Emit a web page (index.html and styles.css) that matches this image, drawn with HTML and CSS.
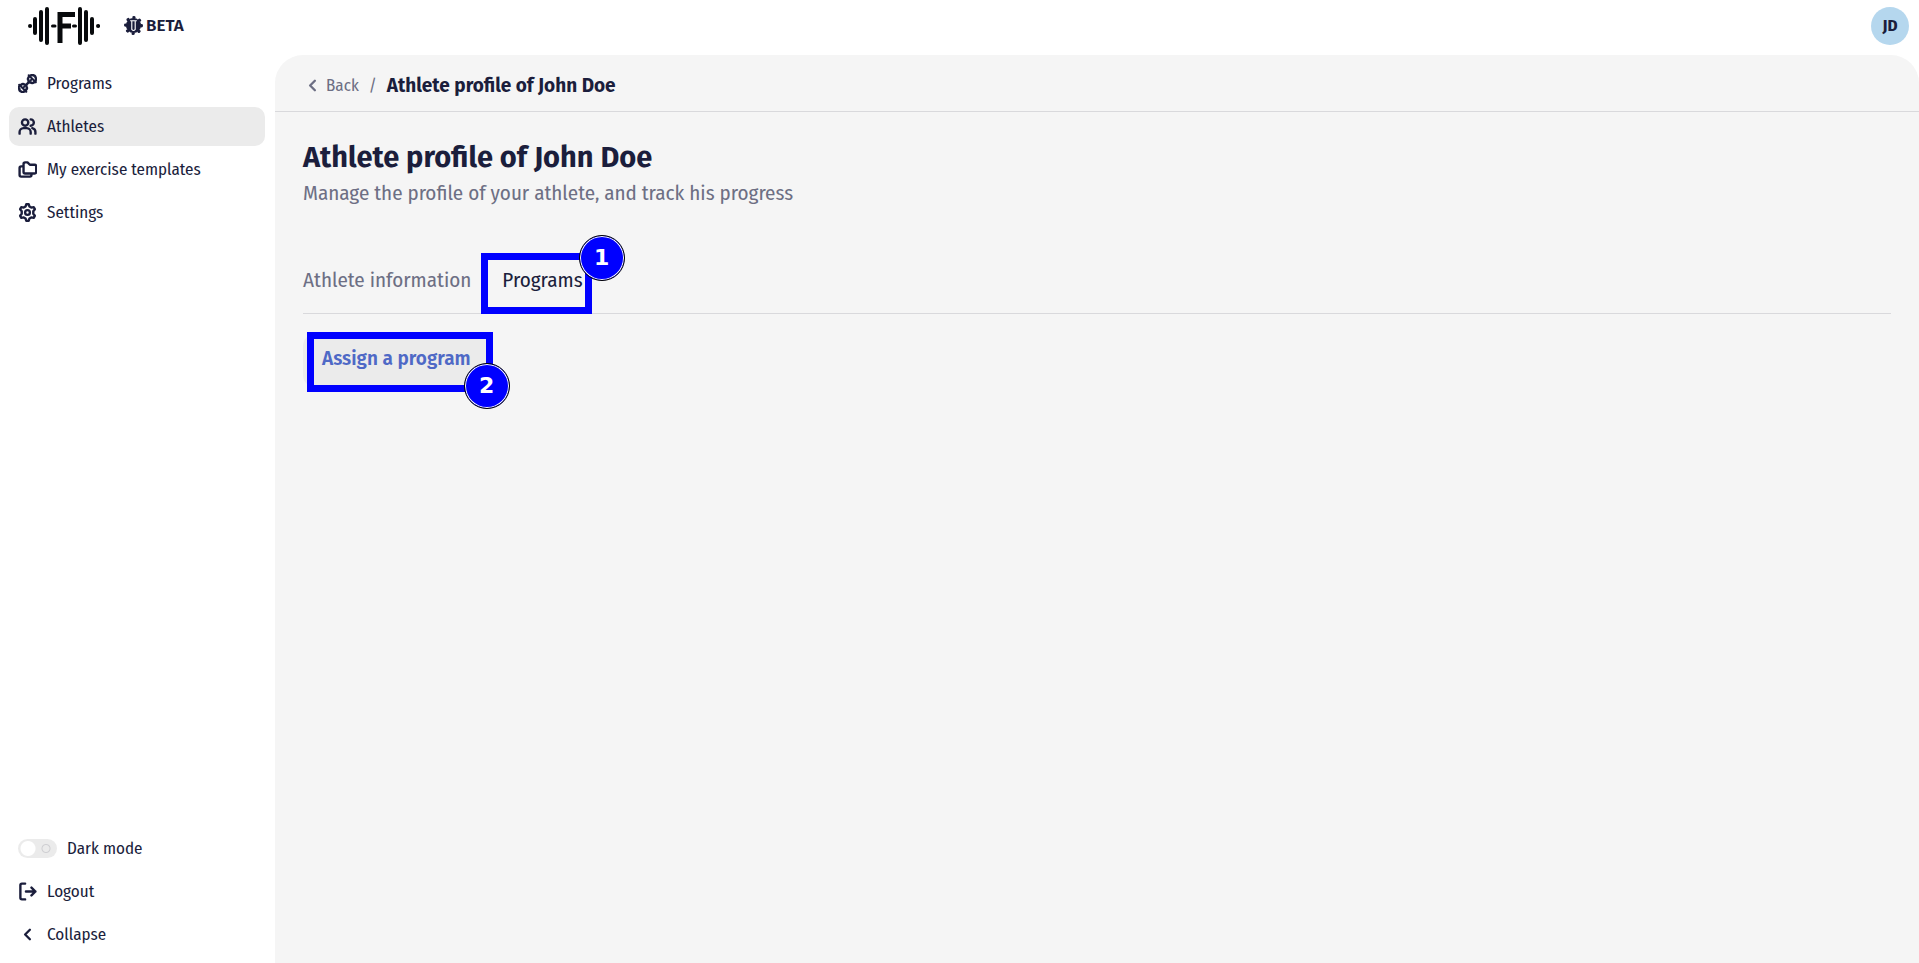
FILE: index.html
```html
<!DOCTYPE html>
<html lang="en">
<head>
<meta charset="utf-8">
<title>Athlete profile of John Doe</title>
<link rel="stylesheet" href="styles.css">
</head>
<body>
<div class="app">
  <header class="topbar">
    <div class="brand">
      <svg class="logo" viewBox="0 0 72 40" role="img" aria-label="F barbell logo">
        <g fill="none" stroke="#080a0c" stroke-width="4" stroke-linecap="round">
          <path d="M2 20h.1M7 13v14M13 6v28M19 3v34M52 3v34M58 6v28M64 13v14M70 20h.1"/>
          <path d="M24.500 20h2.500M45.500 20h2" stroke-width="3"/>
          <path d="M32 37V8.500h15M32 20h11" stroke-width="5" stroke-linecap="butt" stroke-linejoin="miter"/>
        </g>
      </svg>
      <span class="beta">
        <svg class="beta-icon" viewBox="0 0 20 20" aria-hidden="true">
          <circle cx="10" cy="10" r="8" fill="#1b1e3c"/>
          <circle cx="10" cy="10" r="8.500" fill="none" stroke="#1b1e3c" stroke-width="3" stroke-linecap="round" stroke-dasharray=".5 6.175"/>
          <path d="M6.500 5h7M8.200 5v9q1.800 2.500 3.600 0V5" fill="none" stroke="#fff" stroke-width="1.200"/>
        </svg>BETA</span>
    </div>
    <button class="avatar" type="button">JD</button>
  </header>
  <aside class="sidebar">
    <nav class="menu">
      <a class="item" href="#"><svg class="icon" viewBox="0 0 24 24"><path d="M10 14l4-4"/><path d="M2 15.500a2 2 0 0 1 2.500-2 2 2 0 0 1 3.500 0 2 2 0 0 1 2.500 2.500 2 2 0 0 1-.2 3.500 2 2 0 0 1-2.500 2.300 2 2 0 0 1-3.600.2 2 2 0 0 1-2.200-2.800 2 2 0 0 1 0-3.700z"/><path d="M13.500 4.500A2 2 0 0 1 16 2.300a2 2 0 0 1 3.500-.3A2 2 0 0 1 22 4.500 2 2 0 0 1 22 8a2 2 0 0 1-2.300 2.500 2 2 0 0 1-3.500 0A2 2 0 0 1 13.500 8a2 2 0 0 1 0-3.500z"/><path d="m1.500 13.500 9 9M13.500 1.500l9 9M8 16l-2 2M18 6l-2 2" stroke-width="2.500"/></svg>Programs</a>
      <a class="item current" href="#" aria-current="page"><svg class="icon" viewBox="0 0 24 24"><circle cx="9" cy="7" r="4"/><path d="M2 21v-2a5 5 0 0 1 5-5h4a5 5 0 0 1 5 5v2M16 3a4 4 0 0 1 0 8M22 21v-2a5 5 0 0 0-4-5"/></svg>Athletes</a>
      <a class="item" href="#"><svg class="icon" viewBox="0 0 24 24"><path d="M9 3h3l3 3h6a2 2 0 0 1 2 2v7a2 2 0 0 1-2 2H9a2 2 0 0 1-2-2V5a2 2 0 0 1 2-2zM17 17v2a2 2 0 0 1-2 2H4a2 2 0 0 1-2-2V10a2 2 0 0 1 2-2h3"/></svg>My exercise templates</a>
      <a class="item" href="#"><svg class="icon" viewBox="0 0 24 24"><path d="M9.500 4.500 10.500 1.500h3l1 3 2.200 1.300 3.100-.6 1.500 2.600L19.300 10.500v3l2 2.700-1.500 2.600-3.100-.6-2.200 1.300-1 3h-3l-1-3-2.200-1.300-3.100.6-1.500-2.600 2-2.700v-3L2.700 7.800l1.500-2.600 3.100.6z"/><circle cx="12" cy="12" r="3"/></svg>Settings</a>
    </nav>
    <div class="menu">
      <label class="item"><input class="switch" type="checkbox" role="switch">Dark mode</label>
      <button class="item" type="button"><svg class="icon" viewBox="0 0 24 24"><path d="M9 2H5a2 2 0 0 0-2 2v16a2 2 0 0 0 2 2h4M10 12h12M17 7l5 5-5 5"/></svg>Logout</button>
      <button class="item" type="button"><svg class="icon" viewBox="0 0 24 24"><path d="m15 6-6 6 6 6"/></svg>Collapse</button>
    </div>
  </aside>
  <main class="main">
    <nav class="crumbs" aria-label="Breadcrumb">
      <a class="back" href="#"><svg class="icon" viewBox="0 0 24 24"><path d="m15 6-6 6 6 6"/></svg>Back</a>
      <span class="slash">/</span>
      <strong class="here">Athlete profile of John Doe</strong>
    </nav>
    <div class="content">
      <h1 class="title">Athlete profile of John Doe</h1>
      <p class="lead">Manage the profile of your athlete, and track his progress</p>
      <div class="tabs" role="tablist">
        <button class="tab" type="button" role="tab" aria-selected="false">Athlete information</button>
        <button class="tab selected" type="button" role="tab" aria-selected="true">Programs<span class="mark mark-tab"><span class="step">1</span></span></button>
      </div>
      <button class="assign" type="button">Assign a program<span class="mark mark-assign"><span class="step">2</span></span></button>
    </div>
  </main>
</div>
</body>
</html>
```
FILE: styles.css
```css
* { box-sizing: border-box; }
body {
  margin: 0;
  font-family: "Fira Sans Condensed", "Fira Sans", "Noto Sans", sans-serif;
  font-size: 17px;
  line-height: 24px;
  color: #1b1e3c;
  background: #fff;
}
button { font: inherit; color: inherit; border: 0; background: none; padding: 0; text-align: left; cursor: pointer; }
a { color: inherit; text-decoration: none; }
.app {
  display: grid;
  grid-template-columns: 275px 1fr;
  grid-template-rows: auto 1fr;
  min-height: 100vh;
}
.topbar {
  grid-column: 1 / -1;
  display: flex;
  align-items: center;
  justify-content: space-between;
  height: 55px;
  padding: 0 10px 4px 28px;
}
.brand { display: flex; align-items: center; gap: 24px; }
.logo { width: 72px; height: 40px; }
.beta, .here, .title, .assign { font-family: "Fira Sans", "Noto Sans", sans-serif; }
.beta {
  display: flex;
  align-items: center;
  gap: 3px;
  font-weight: 600;
}
.beta-icon { width: 19px; height: 19px; }
.avatar {
  width: 38px;
  height: 38px;
  border-radius: 50%;
  background: #b5d7ee;
  font-weight: 700;
  text-align: center;
}
.sidebar {
  display: flex;
  flex-direction: column;
  justify-content: space-between;
  padding: 9px 10px 9px 9px;
}
.menu { display: flex; flex-direction: column; gap: 4px; }
.item {
  display: flex;
  align-items: center;
  gap: 10px;
  height: 39px;
  padding: 0 9px;
  border-radius: 10px;
  cursor: pointer;
}
.current { background: #ebebeb; }
.icon {
  width: 19px;
  height: 19px;
  fill: none;
  stroke: currentColor;
  stroke-width: 3;
  stroke-linecap: round;
  stroke-linejoin: round;
}
.switch {
  appearance: none;
  width: 39px;
  height: 19px;
  margin: 0;
  border-radius: 10px;
  background:
    radial-gradient(circle at 10px 50%, #fff 7px, transparent 8px),
    radial-gradient(circle at 28px 50%, transparent 3px, #cfcfd2 4px, transparent 5px),
    #ebebeb;
}
.main { background: #f5f5f5; border-radius: 28px 28px 0 0; }
.crumbs {
  display: flex;
  align-items: center;
  gap: 10px;
  height: 57px;
  padding: 5px 28px 0;
  border-bottom: 1px solid #d9d9dc;
}
.back { display: flex; align-items: center; gap: 4px; color: #6d6f84; }
.slash { color: #6d6f84; }
.here { font-size: 19px; font-weight: 700; }
.content { padding: 28px; }
.title { margin: 0; font-size: 29px; line-height: 36px; font-weight: 700; }
.lead { margin: 2px 0 0; font-size: 21px; line-height: 30px; color: #6d6f84; }
.tabs {
  display: flex;
  gap: 31px;
  margin-top: 45px;
  border-bottom: 1px solid #d9d9dc;
}
.tab { height: 60px; padding-bottom: 6px; font-size: 21px; color: #6d6f84; }
.selected { position: relative; color: #1b1e3c; }
.assign {
  position: relative;
  margin-top: 20px;
  height: 53px;
  padding: 0 19px 3px;
  border-radius: 12px;
  background: #ebebeb;
  color: #4f69c6;
  font-size: 19px;
  font-weight: 600;
}
.mark { position: absolute; border: 7px solid #00f; }
.mark-tab { top: 0; bottom: -1px; left: -21px; right: -9px; }
.mark-assign { top: -2px; bottom: -5px; left: 4px; right: -3px; }
.step {
  position: absolute;
  width: 46px;
  height: 46px;
  border: 1px solid #000;
  border-radius: 50%;
  background: #00f;
  box-shadow: inset 0 0 0 1px #fff;
  color: #fff;
  font: 700 22px/44px "DejaVu Sans", sans-serif;
  text-align: center;
}
.mark-tab .step { top: -25px; right: -40px; }
.mark-assign .step { right: -24px; bottom: -24px; }
```
